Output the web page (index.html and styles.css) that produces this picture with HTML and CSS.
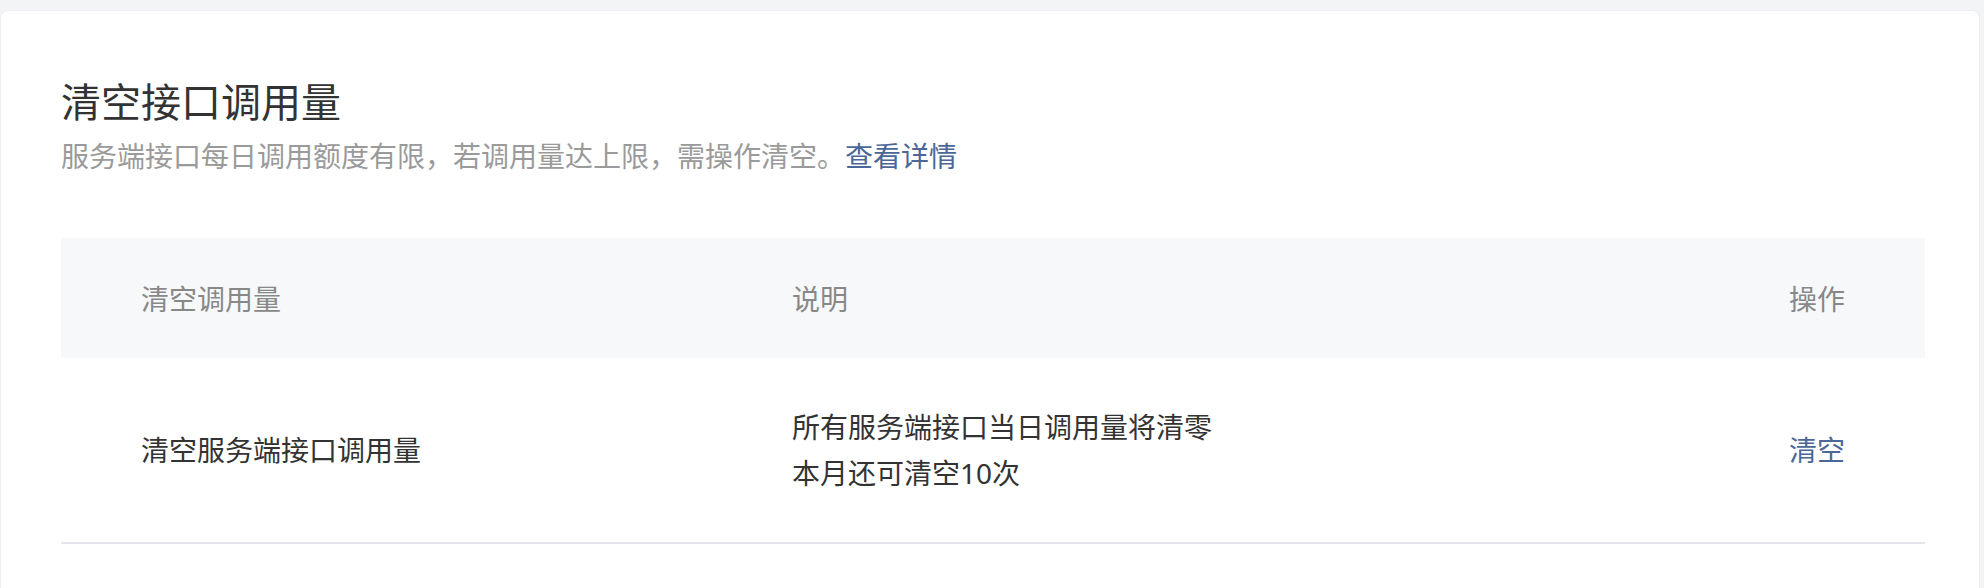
FILE: index.html
```html
<!DOCTYPE html>
<html>
<head>
    <meta charset="utf-8">
    <title>清空接口调用量</title>
    <link rel="stylesheet" href="styles.css">
</head>
<body>
    <div class="card">
        <h1 class="title">清空接口调用量</h1>
        <p class="subtitle">服务端接口每日调用额度有限，若调用量达上限，需操作清空。<a href="#" class="link">查看详情</a></p>

        <div class="table">
            <div class="row head">
                <div class="cell">清空调用量</div>
                <div class="cell">说明</div>
                <div class="cell action">操作</div>
            </div>
            <div class="row body">
                <div class="cell">清空服务端接口调用量</div>
                <div class="cell">
                    <div>所有服务端接口当日调用量将清零</div>
                    <div>本月还可清空10次</div>
                </div>
                <div class="cell action"><a href="#" class="link">清空</a></div>
            </div>
        </div>
    </div>
</body>
</html>
```

FILE: styles.css
```css
html,
body {
    height: 100%;
}

body {
    margin: 0;
    padding: 10px 4px 0 0;
    box-sizing: border-box;
    overflow: hidden;
    background-color: #f3f4f6;
    font-family: "Noto Sans", "Noto Sans CJK SC", sans-serif;
    color: #333;
}

.card {
    min-height: 620px;
    padding: 64px 54px 0 60px;
    border: 1px solid #eceef1;
    border-radius: 8px;
    background-color: #ffffff;
}

.title {
    margin: 0;
    font-size: 40px;
    font-weight: 400;
    line-height: 54px;
    color: #333;
}

.subtitle {
    margin: 7px 0 0;
    font-size: 28px;
    line-height: 40px;
    color: #9a9a9a;
}

.link {
    color: #4a6797;
    text-decoration: none;
}

.table {
    margin-top: 62px;
    font-size: 28px;
}

.row {
    display: grid;
    grid-template-columns: 651px 1fr auto;
    align-items: center;
}

.cell {
    padding-left: 80px;
}

.cell.action {
    padding: 0 80px 0 0;
}

.head {
    height: 120px;
    background-color: #f7f8fa;
    color: #888;
}

.body {
    padding: 46px 0;
    line-height: 46px;
    border-bottom: 2px solid #e5e6eb;
}
```
